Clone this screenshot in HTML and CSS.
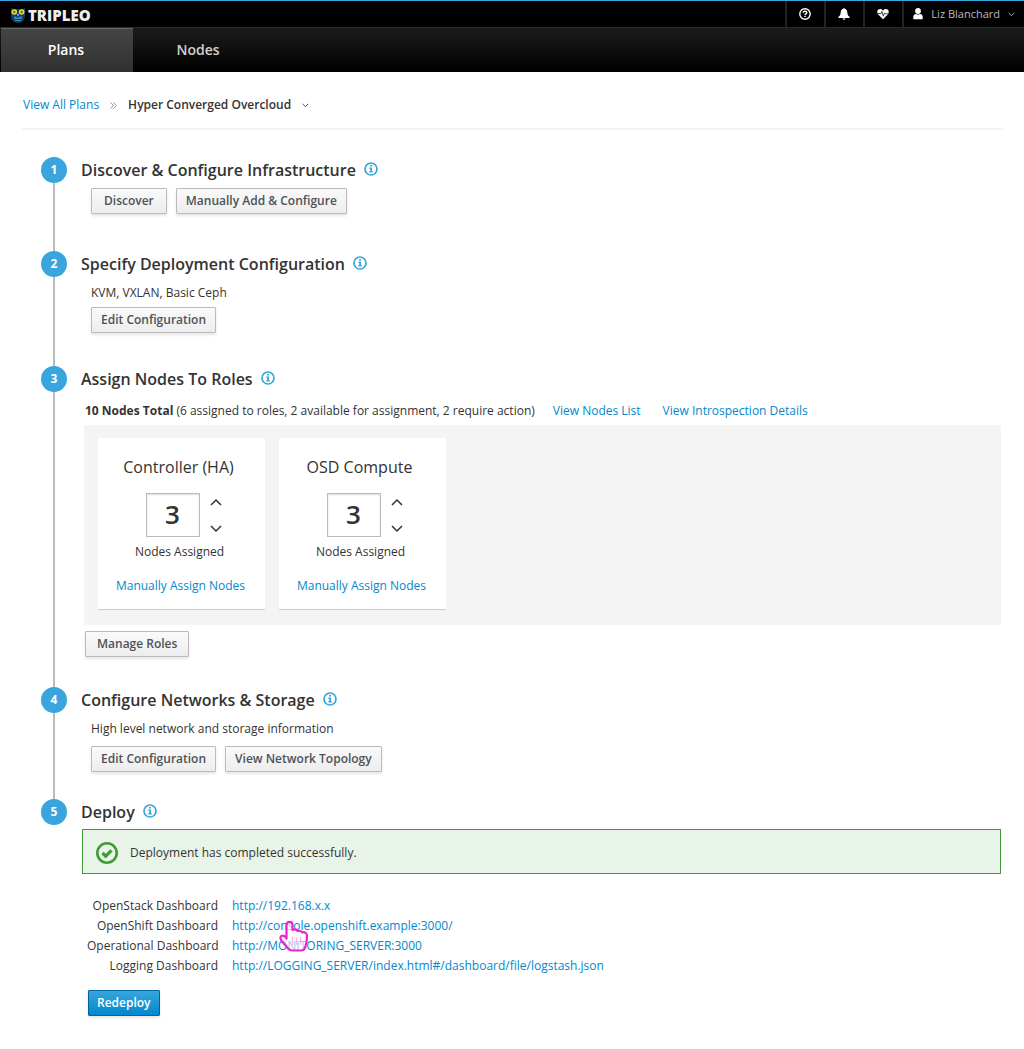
FILE: index.html
```html
<!DOCTYPE html>
<html lang="en">
<head>
<meta charset="utf-8">
<title>TripleO - Hyper Converged Overcloud</title>
<meta name="viewport" content="width=device-width, initial-scale=1">
<link rel="stylesheet" href="styles.css">
</head>
<body>
<svg class="symbols" aria-hidden="true">
  <symbol id="info" viewBox="0 0 14 14">
    <circle cx="7" cy="7" r="6" fill="none" stroke="currentColor" stroke-width="1.7"/>
    <path fill="currentColor" d="M6.1 3h1.9v1.6H6.1zM5.3 5.6H8v3.7h.9v1.2H5.2V9.3h1V6.8h-.9z"/>
  </symbol>
  <symbol id="up" viewBox="0 0 12 8"><path d="M1 7l5-5 5 5" fill="none" stroke="currentColor" stroke-width="1.5"/></symbol>
  <symbol id="down" viewBox="0 0 12 8"><path d="M1 1l5 5 5-5" fill="none" stroke="currentColor" stroke-width="1.5"/></symbol>
</svg>

<header class="masthead">
  <div class="topbar">
    <a class="brand" href="#">
      <svg class="owl" viewBox="0 0 16 16" aria-hidden="true">
        <path d="M1 1l3 1h8l3-1v8c0 4-3 7-7 7s-7-3-7-7z" fill="#173a63"/>
        <path d="M4 9l4 2 4-2-1 5H5z" fill="#3b8fc4"/>
        <path d="M5 12h6v1H5z" fill="#173a63"/>
        <circle cx="4.300" cy="5" r="2.800" fill="#e9dc3c"/>
        <circle cx="11.700" cy="5" r="2.800" fill="#e9dc3c"/>
        <circle cx="4.300" cy="5" r="1.200" fill="#6c6a20"/>
        <circle cx="11.700" cy="5" r="1.200" fill="#6c6a20"/>
        <path d="M7 7h2l-1 3z" fill="#8cd0f0"/>
      </svg>
      <span>TRIPLEO</span>
    </a>
    <div class="tools">
      <button class="tool" type="button" aria-label="Help">
        <svg width="12" height="12" viewBox="0 0 12 12"><circle cx="6" cy="6" r="5.200" fill="none" stroke="currentColor" stroke-width="1.400"/><path d="M4.200 4.800c0-1 .8-1.600 1.800-1.600s1.800.6 1.800 1.500c0 1.100-1.700 1.100-1.700 2.200" fill="none" stroke="currentColor" stroke-width="1.400"/><path d="M5.300 7.700h1.500v1.400H5.300z" fill="currentColor"/></svg>
      </button>
      <button class="tool" type="button" aria-label="Notifications">
        <svg width="12" height="12" viewBox="0 0 12 12"><path fill="currentColor" d="M5.300.8a.7.7 0 0 1 1.400 0c1.700.4 2.500 1.700 2.600 3.400.1 2.400.7 3.700 2.200 4.600v1.100H.5V8.800c1.500-.9 2.100-2.200 2.200-4.600C2.800 2.500 3.600 1.200 5.300.8zM4.700 10.400h2.600c0 1-.6 1.400-1.300 1.400s-1.300-.4-1.300-1.400z"/></svg>
      </button>
      <button class="tool" type="button" aria-label="Status">
        <svg width="12" height="12" viewBox="0 0 12 12"><path fill="currentColor" d="M6 11.300L1.200 6.400C-.2 4.500 0 2.600 1.300 1.600 2.900.4 4.900.8 6 2.500 7.100.8 9.100.4 10.700 1.600c1.300 1 1.500 2.900.1 4.800z"/><path d="M1 5.500h3l1-2 1.300 4.700L7.500 5l.7.800H11" fill="none" stroke="#000" stroke-width=".7"/></svg>
      </button>
      <button class="tool user" type="button">
        <svg width="10" height="12" viewBox="0 0 10 12"><circle cx="5" cy="3" r="2.900" fill="currentColor"/><path fill="currentColor" d="M.3 11.300V9c0-1.900 1-2.900 2.700-3.100 1.200.8 2.800.8 4 0C8.700 6.100 9.700 7.100 9.700 9v2.300z"/></svg>
        <span>Liz Blanchard</span>
        <svg class="caret" viewBox="0 0 12 8"><use href="#down"/></svg>
      </button>
    </div>
  </div>
  <nav class="tabs">
    <a class="tab active" href="#" aria-current="page">Plans</a>
    <a class="tab" href="#">Nodes</a>
  </nav>
</header>

<main class="page">
  <nav class="breadcrumb" aria-label="Breadcrumb">
    <a href="#">View All Plans</a>
    <svg class="separator" viewBox="0 0 7 7" aria-hidden="true"><path d="M.5.5l3 3-3 3M3.500.5l3 3-3 3" fill="none" stroke="#999"/></svg>
    <button class="plan-menu" type="button">Hyper Converged Overcloud <svg class="caret" viewBox="0 0 12 8"><use href="#down"/></svg></button>
  </nav>

  <ol class="steps">
    <li class="step discover">
      <div class="marker"><span class="number">1</span></div>
      <section>
        <h2>Discover &amp; Configure Infrastructure <button class="info" type="button" aria-label="About infrastructure"><svg><use href="#info"/></svg></button></h2>
        <div class="indent actions">
          <button class="btn wide" type="button">Discover</button>
          <button class="btn" type="button">Manually Add &amp; Configure</button>
        </div>
      </section>
    </li>
    <li class="step specify">
      <div class="marker"><span class="number">2</span></div>
      <section>
        <h2>Specify Deployment Configuration <button class="info" type="button" aria-label="About deployment configuration"><svg><use href="#info"/></svg></button></h2>
        <div class="indent">
          <p class="summary">KVM, VXLAN, Basic Ceph</p>
          <div class="actions"><button class="btn" type="button">Edit Configuration</button></div>
        </div>
      </section>
    </li>
    <li class="step assign">
      <div class="marker"><span class="number">3</span></div>
      <section>
        <h2>Assign Nodes To Roles <button class="info" type="button" aria-label="About roles"><svg><use href="#info"/></svg></button></h2>
        <div class="roles-body">
          <div class="node-summary">
            <p><strong>10 Nodes Total</strong> (6 assigned to roles, 2 available for assignment, 2 require action)</p>
            <a href="#">View Nodes List</a>
            <a href="#">View Introspection Details</a>
          </div>
          <div class="roles">
            <article class="role">
              <h3>Controller (HA)</h3>
              <div class="spinner">
                <input id="controller" type="text" inputmode="numeric" value="3">
                <div class="arrows">
                  <button type="button" aria-label="Add a controller node"><svg><use href="#up"/></svg></button>
                  <button type="button" aria-label="Remove a controller node"><svg><use href="#down"/></svg></button>
                </div>
              </div>
              <label for="controller">Nodes Assigned</label>
              <a href="#">Manually Assign Nodes</a>
            </article>
            <article class="role">
              <h3>OSD Compute</h3>
              <div class="spinner">
                <input id="compute" type="text" inputmode="numeric" value="3">
                <div class="arrows">
                  <button type="button" aria-label="Add a compute node"><svg><use href="#up"/></svg></button>
                  <button type="button" aria-label="Remove a compute node"><svg><use href="#down"/></svg></button>
                </div>
              </div>
              <label for="compute">Nodes Assigned</label>
              <a href="#">Manually Assign Nodes</a>
            </article>
          </div>
          <div class="manage"><button class="btn" type="button">Manage Roles</button></div>
        </div>
      </section>
    </li>
    <li class="step configure">
      <div class="marker"><span class="number">4</span></div>
      <section>
        <h2>Configure Networks &amp; Storage <button class="info" type="button" aria-label="About networks and storage"><svg><use href="#info"/></svg></button></h2>
        <div class="indent">
          <p class="summary">High level network and storage information</p>
          <div class="actions">
            <button class="btn" type="button">Edit Configuration</button>
            <button class="btn" type="button">View Network Topology</button>
          </div>
        </div>
      </section>
    </li>
    <li class="step">
      <div class="marker"><span class="number">5</span></div>
      <section>
        <h2>Deploy <button class="info" type="button" aria-label="About deployment"><svg><use href="#info"/></svg></button></h2>
        <div class="alert" role="status">
          <svg width="22" height="22" viewBox="0 0 22 22" aria-hidden="true"><circle cx="11" cy="11" r="9.700" fill="none" stroke="currentColor" stroke-width="2.600"/><path d="M6.500 11l3.200 3.200 5.800-5.800" fill="none" stroke="currentColor" stroke-width="3.200"/></svg>
          <span>Deployment has completed successfully.</span>
        </div>
        <div class="results">
          <dl class="dashboards">
            <dt>OpenStack Dashboard</dt><dd><a href="#">http://192.168.x.x</a></dd>
            <dt>OpenShift Dashboard</dt><dd><a href="#">http://console.openshift.example:3000/</a></dd>
            <dt>Operational Dashboard</dt><dd><a href="#">http://MONITORING_SERVER:3000</a></dd>
            <dt>Logging Dashboard</dt><dd><a href="#">http://LOGGING_SERVER/index.html#/dashboard/file/logstash.json</a></dd>
          </dl>
          <svg class="pointer" viewBox="0 0 30 32" aria-hidden="true">
            <path d="M7.500 18.500V5c0-4.300 6-4.300 6 0v5c2-.8 4.200-.3 5 1 1.800-.6 3.900 0 4.500 1.300 2.800-.6 5 .8 5 3.700 0 4-.4 7.500-1.800 11.200-.7 2.300-1.900 3.300-4 3.300h-8.500c-2.600 0-4.500-1.200-6-3.600C5.500 23.700 2 21.500 1.500 18.500c-.4-3 3-4.400 6 0z" fill="#fff" fill-opacity=".6" stroke="#f01fd0" stroke-width="2.200" stroke-linejoin="round"/>
            <path d="M13.500 17v8M17.500 17v8M21.500 17v8" stroke="#f01fd0" stroke-opacity=".3" stroke-width="1.500"/>
          </svg>
          <button class="btn primary" type="button">Redeploy</button>
        </div>
      </section>
    </li>
  </ol>
</main>
</body>
</html>
```
FILE: styles.css
```css
* { box-sizing: border-box; }
body {
  margin: 0;
  background: #fff;
  color: #333;
  font: 12px/18px "Open Sans", "Noto Sans", sans-serif;
}
h2, h3, p, ol, dl, dd { margin: 0; padding: 0; }
button { font: inherit; color: inherit; background: none; border: 0; padding: 0; cursor: pointer; }
a { color: #0088ce; text-decoration: none; }
svg { display: block; flex: none; }
.symbols { position: absolute; width: 0; height: 0; }

/* Header */
.masthead { background: #000; border-top: 1px solid #39a5dc; }
.topbar { display: flex; justify-content: space-between; height: 26px; }
.brand {
  display: flex; align-items: center; gap: 2px; padding: 2px 0 0 10px;
  color: #eee; font-size: 15px; font-weight: 800;
}
.owl { width: 16px; height: 16px; }
.tools { display: flex; }
.tool {
  width: 39px; display: flex; align-items: center; justify-content: center;
  padding-right: 2px; border-left: 2px solid #222; color: #fff;
}
.user { width: auto; gap: 8px; padding: 0 9px; font-size: 11px; }
.user span { color: #bbb; }
.caret { width: 7px; height: 5px; }
.user .caret { color: #bbb; }
.tabs {
  display: flex; height: 45px; padding-left: 1px;
  border-top: 1px solid #2b2b2b;
  background: linear-gradient(#1c1c1c, #000);
}
.tab {
  width: 132px; display: flex; align-items: center; justify-content: center;
  padding-right: 2px; color: #d1d1d1; font-size: 14px; font-weight: 600;
}
.tab.active {
  color: #fff; box-shadow: inset 0 1px #666;
  background: linear-gradient(#454545, #303030);
}

/* Page */
.page { padding: 0 21px 24px 22px; }
.breadcrumb {
  display: flex; align-items: center; gap: 11px; height: 58px;
  padding: 10px 0 0 1px; border-bottom: 2px solid #f5f5f5;
}
.separator { width: 7px; height: 7px; }
.plan-menu { display: flex; align-items: center; gap: 11px; font-weight: 600; }

/* Steps */
.steps { list-style: none; padding: 27px 2px 0 19px; }
.step { display: grid; grid-template-columns: 26px minmax(0, 1fr); column-gap: 14px; }
.marker { display: flex; flex-direction: column; align-items: center; }
.marker::after { content: ""; flex: 1; width: 2px; background: #bbb; }
.step:last-child .marker::after { display: none; }
.number {
  width: 26px; height: 26px; border-radius: 50%; background: #39a5dc;
  color: #fff; font-weight: 700; line-height: 26px; text-align: center;
}
.discover section { padding-bottom: 37px; }
.specify section { padding-bottom: 33px; }
.assign section { padding-bottom: 30px; }
.configure section { padding-bottom: 27px; }
h2 { display: flex; align-items: center; gap: 8px; height: 26px; font-size: 16px; font-weight: 600; }
.info { padding-bottom: 2px; color: #39a5dc; }
.info svg { width: 14px; height: 14px; }
.indent { padding-left: 10px; }
.actions { display: flex; gap: 9px; padding-top: 5px; }
.summary { padding-top: 7px; }
.configure .summary { padding-bottom: 3px; }
.btn {
  height: 26px; padding: 0 9px; border: 1px solid #bbb; border-radius: 1px;
  background: linear-gradient(#fafafa, #ededed);
  box-shadow: 0 2px 3px rgba(3, 3, 3, .1);
  color: #4d5258; font-weight: 600; line-height: 24px;
}
.btn.wide { padding: 0 12px; }

/* Roles */
.roles-body { padding-left: 3px; }
.node-summary { display: flex; flex-wrap: wrap; column-gap: 18px; padding: 10px 0 5px 1px; }
.node-summary a + a { margin-left: 4px; }
.roles {
  display: flex; flex-wrap: wrap; gap: 14px; margin-bottom: 6px;
  padding: 13px 14px 15px; background: #f4f4f4;
}
.role {
  width: 167px; height: 172px; padding: 18px 4px 0 0; background: #fff;
  border-bottom: 1px solid #ccc;
  display: flex; flex-direction: column; align-items: center;
}
h3 { padding-right: 2px; font-size: 16px; font-weight: 400; line-height: 22px; }
.spinner { display: flex; gap: 8px; margin: 15px 0 6px; padding-left: 10px; }
.spinner input {
  width: 54px; height: 44px; padding: 0 0 2px; border: 1px solid #bbb; border-radius: 0;
  box-shadow: inset 0 1px 2px #ddd; color: #333;
  font: 600 26px/36px "Open Sans", "Noto Sans", sans-serif; text-align: center;
}
.arrows { display: flex; flex-direction: column; justify-content: space-between; padding: 3px 0 2px; }
.arrows button { width: 16px; height: 12px; display: grid; place-items: center; }
.arrows svg { width: 12px; height: 8px; }
.role label { margin-bottom: 16px; }
.role > a { padding-left: 2px; }
.manage { padding-left: 1px; }
.manage .btn { padding: 0 11px; }

/* Deployment result */
.alert {
  display: flex; align-items: center; gap: 12px; height: 45px;
  margin: 4px 0 22px 1px; padding: 2px 13px 0; border: 1px solid #3f9c35; background: #e9f4e9;
}
.alert svg { color: #3f9c35; }
.results { position: relative; padding-left: 6px; }
.dashboards {
  display: grid; grid-template-columns: 131px minmax(0, 1fr); column-gap: 14px;
  line-height: 20px; margin-bottom: 14px;
}
.dashboards dt { text-align: right; white-space: nowrap; }
.pointer { position: absolute; left: 198px; top: 24px; width: 30px; height: 32px; pointer-events: none; }
.btn.primary {
  margin-left: 1px; border-color: #00659c; color: #fff; padding: 0 8px;
  background: linear-gradient(#39a5dc, #0088ce);
}
```
